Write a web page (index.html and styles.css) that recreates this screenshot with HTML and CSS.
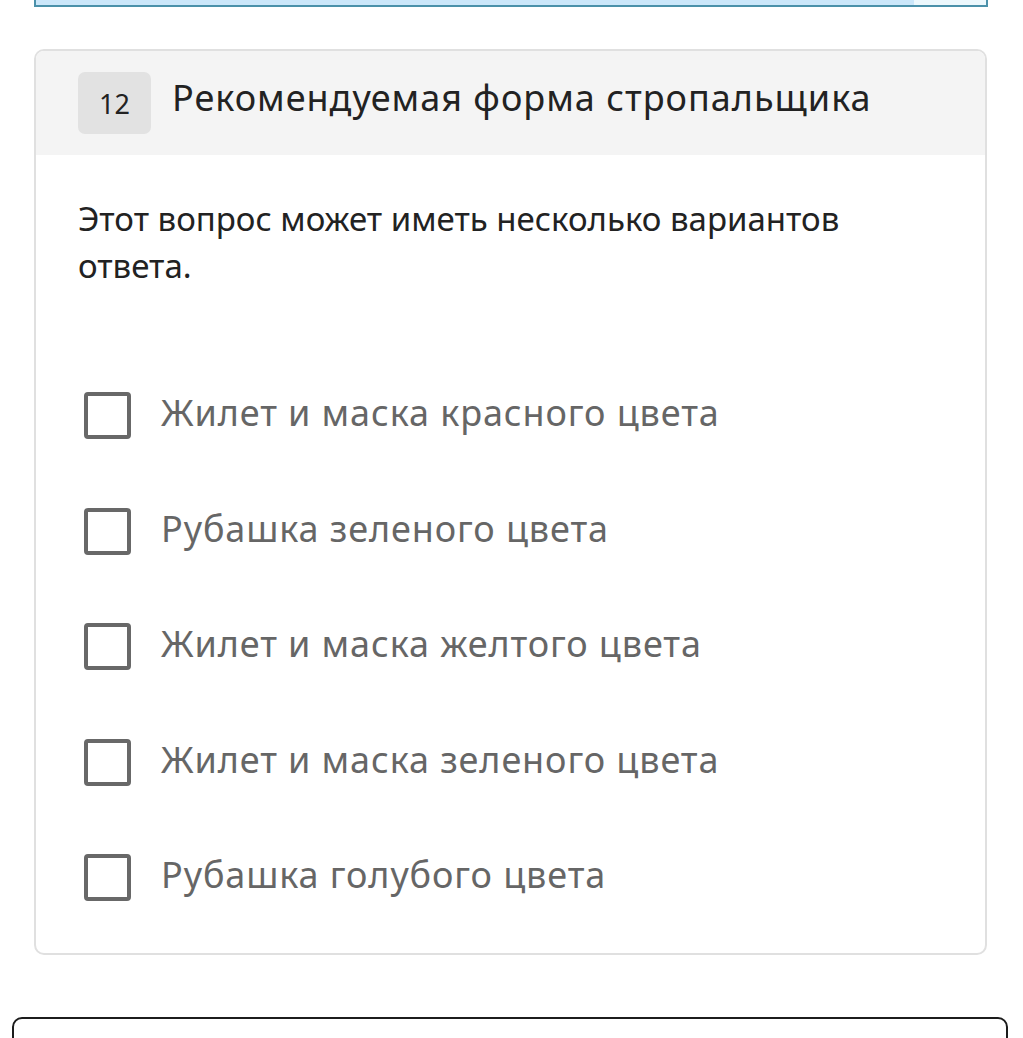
FILE: index.html
```html
<!DOCTYPE html>
<html lang="ru">
<head>
<meta charset="utf-8">
<title>Вопрос 12</title>
<link rel="stylesheet" href="styles.css">
</head>
<body>
<div class="progress"><div class="progress-fill" style="width: 92.4%"></div></div>

<section class="question">
  <header class="question-head">
    <span class="question-num">12</span>
    <h2 class="question-title">Рекомендуемая форма стропальщика</h2>
  </header>
  <div class="question-body">
    <p class="question-hint">Этот вопрос может иметь несколько вариантов ответа.</p>
    <ul class="options">
      <li class="option"><span class="box"></span><span class="label">Жилет и маска красного цвета</span></li>
      <li class="option"><span class="box"></span><span class="label">Рубашка зеленого цвета</span></li>
      <li class="option"><span class="box"></span><span class="label">Жилет и маска желтого цвета</span></li>
      <li class="option"><span class="box"></span><span class="label">Жилет и маска зеленого цвета</span></li>
      <li class="option"><span class="box"></span><span class="label">Рубашка голубого цвета</span></li>
    </ul>
  </div>
</section>

<div class="next-card"></div>
</body>
</html>
```

FILE: styles.css
```css
html, body {
  margin: 0;
  padding: 0;
  background: #ffffff;
}

body {
  font-family: "Noto Sans", "Open Sans", sans-serif;
  color: #222222;
  height: 1038px;
  overflow: hidden;
}

/* progress strip, its top edge runs off the page */
.progress {
  margin: 0 35px 0 34px;
  height: 5px;
  border: 2px solid #4b91aa;
  border-top: 0;
  background: #ecf8fd;
}

.progress-fill {
  height: 100%;
  background: #cbe7fa;
}

/* question card */
.question {
  margin: 42px 36px 0 34px;
  border: 2px solid #e0e0e0;
  border-radius: 10px;
  overflow: hidden;
}

.question-head {
  display: flex;
  align-items: center;
  gap: 21px;
  height: 104px;
  padding: 0 42px;
  background: #f4f4f4;
}

.question-num {
  display: flex;
  align-items: center;
  justify-content: center;
  width: 73px;
  height: 62px;
  border-radius: 7px;
  background: #e2e2e2;
  font-size: 27px;
  font-weight: 400;
  color: #222;
}

.question-title {
  margin: 0;
  font-size: 36px;
  letter-spacing: 1px;
  font-weight: 400;
  color: #222;
  position: relative;
  top: -6px;
}

.question-body {
  padding: 40px 42px 17px 42px;
}

.question-hint {
  margin: 0;
  width: 820px;
  font-size: 33px;
  line-height: 47px;
  color: #222;
}

.options {
  list-style: none;
  margin: 69px 0 0 0;
  padding: 0;
}

.option {
  display: flex;
  align-items: center;
  gap: 30px;
  height: 115.5px;
  padding-left: 6px;
}

.box {
  flex: none;
  width: 39px;
  height: 39px;
  border: 4px solid #686868;
  border-radius: 4px;
}

.label {
  font-size: 36px;
  letter-spacing: 0.9px;
  color: #666666;
  position: relative;
  top: -3px;
}

/* edge of the following card */
.next-card {
  margin: 62px 15px 0 12px;
  height: 60px;
  border: 2px solid #1c1c1c;
  border-radius: 10px;
}
```
